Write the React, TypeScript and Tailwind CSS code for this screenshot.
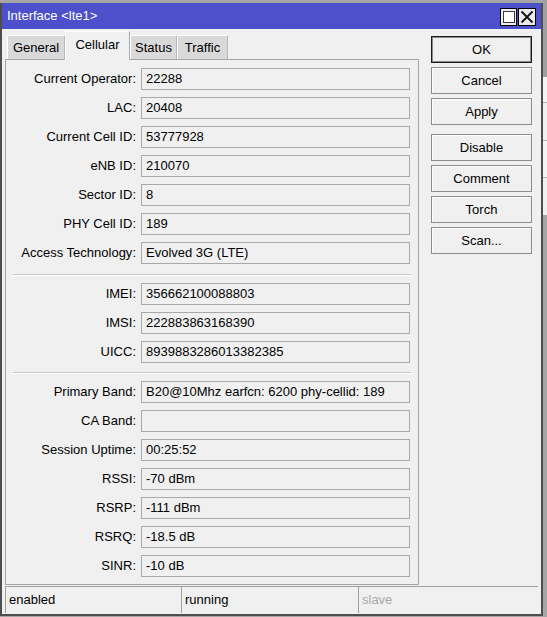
import React from 'react';

type Row = [string, string];

const cellInfo: Row[] = [
  ['Current Operator', '22288'],
  ['LAC', '20408'],
  ['Current Cell ID', '53777928'],
  ['eNB ID', '210070'],
  ['Sector ID', '8'],
  ['PHY Cell ID', '189'],
  ['Access Technology', 'Evolved 3G (LTE)'],
];

const simInfo: Row[] = [
  ['IMEI', '356662100088803'],
  ['IMSI', '222883863168390'],
  ['UICC', '8939883286013382385'],
];

const signalInfo: Row[] = [
  ['Primary Band', 'B20@10Mhz earfcn: 6200 phy-cellid: 189'],
  ['CA Band', ''],
  ['Session Uptime', '00:25:52'],
  ['RSSI', '-70 dBm'],
  ['RSRP', '-111 dBm'],
  ['RSRQ', '-18.5 dB'],
  ['SINR', '-10 dB'],
];

const tabs = [
  { name: 'General', w: 'w-[58px]' },
  { name: 'Cellular', w: 'w-[65px]' },
  { name: 'Status', w: 'w-[47px]' },
  { name: 'Traffic', w: 'w-[51px]' },
];

const Field = ({ label, value }: { label: string; value: string }) => (
  <div className="flex h-[22px] items-center">
    <span className="w-[135px] shrink-0 pr-[5px] text-right">{label}:</span>
    <div className="flex h-[22px] w-[269px] items-center border border-[#a9a9a9] pl-[4px] whitespace-nowrap">
      {value}
    </div>
  </div>
);

const Separator = ({ top }: { top: string }) => (
  <div className={`mx-[7px] ${top} h-[2px] border-t border-b border-t-[#c6c6c6] border-b-white`} />
);

const Button = ({ label, primary, extra }: { label: string; primary?: boolean; extra?: string }) => (
  <button
    type="button"
    className={`h-[27px] w-[101px] bg-[#f0f0f0] text-[13px] text-black ${
      primary
        ? 'border border-[#1c1c1c] shadow-[inset_0_0_0_1px_#8a8a8a]'
        : 'border border-[#8c8c8c] shadow-[inset_1px_1px_0_#ffffff]'
    } ${extra ?? ''}`}
  >
    {label}
  </button>
);

export default function App() {
  return (
    <div className="flex h-[617px] w-[547px] overflow-hidden bg-[#a6a6a6] font-['Liberation_Sans',Arial,sans-serif] text-[13px] text-black">
      <div className="mt-[3px] flex h-[613px] w-[543px] shrink-0 flex-col border-x-2 border-b-2 border-[#4e4e4e] bg-[#f0f0f0]">
        {/* title bar */}
        <div className="flex h-[26px] shrink-0 items-center bg-[#4c50cb] pl-[5px] pr-[5px]">
          <span className="text-white">Interface &lt;lte1&gt;</span>
          <div className="ml-auto flex gap-[1px] pt-[1px]">
            <div className="flex h-[18px] w-[17px] items-center justify-center border border-black bg-[#ececec]">
              <div className="h-[12px] w-[12px] border border-[#3a3a3a] bg-white" />
            </div>
            <div className="flex h-[18px] w-[18px] items-center justify-center border border-black bg-[#ececec]">
              <svg width="14" height="14" viewBox="0 0 14 14">
                <path d="M1.5 1.5 L12.5 12.5 M12.5 1.5 L1.5 12.5" stroke="#111" strokeWidth="1.8" />
              </svg>
            </div>
          </div>
        </div>

        <div className="flex">
          {/* tabs + cellular panel */}
          <div className="ml-[3px] pt-[2px]">
            <div className="ml-[2px] flex h-[28px] items-end">
              {tabs.map((t) =>
                t.name === 'Cellular' ? (
                  <div
                    key={t.name}
                    className={`relative z-10 -mb-px flex h-[29px] ${t.w} items-center justify-center border-t border-l border-r border-t-white border-l-white border-r-[#a9a9a9] bg-[#f0f0f0] pb-[3px]`}
                  >
                    {t.name}
                  </div>
                ) : (
                  <div
                    key={t.name}
                    className={`flex h-[24px] ${t.w} items-center justify-center border-t border-l border-r border-t-white border-l-white border-r-[#b9b9b9] bg-[#d9d9d9]`}
                  >
                    {t.name}
                  </div>
                )
              )}
            </div>
            <div className="flex h-[526px] w-[414px] flex-col gap-[7px] border border-[#a5a5a5] pt-[8px]">
              {cellInfo.map(([l, v]) => (
                <Field key={l} label={l} value={v} />
              ))}
              <Separator top="mt-[3px]" />
              {simInfo.map(([l, v]) => (
                <Field key={l} label={l} value={v} />
              ))}
              <Separator top="mt-[2px]" />
              {signalInfo.map(([l, v]) => (
                <Field key={l} label={l} value={v} />
              ))}
            </div>
          </div>

          {/* dialog buttons */}
          <div className="ml-[12px] flex flex-col gap-[4px] pt-[7px]">
            <Button label="OK" primary />
            <Button label="Cancel" />
            <Button label="Apply" />
            <Button label="Disable" extra="mt-[5px]" />
            <Button label="Comment" />
            <Button label="Torch" />
            <Button label="Scan..." />
          </div>
        </div>

        {/* status bar */}
        <div className="ml-[3px] mr-[3px] mt-px flex h-[27px]">
          <div className="flex w-[176px] items-center border-t border-l border-[#a0a0a0] pl-[3px]">enabled</div>
          <div className="flex w-[177px] items-center border-t border-l border-[#a0a0a0] pl-[3px]">running</div>
          <div className="flex flex-1 items-center border-t border-l border-[#a0a0a0] pl-[3px] text-[#a8a8a8]">
            slave
          </div>
        </div>
      </div>

      {/* strip of the window behind */}
      <div className="flex w-[4px] flex-col">
        <div className="h-[77px] bg-[#a0a0a0]" />
        <div className="h-[25px] bg-[#f4f4f4]" />
        <div className="h-[38px] border-t border-[#b4b4b4] bg-[#f0f0f0]" />
        <div className="h-[37px] border-t border-[#b4b4b4] bg-[#f4f4f4]" />
        <div className="h-[38px] border-t border-[#b4b4b4] bg-[#f0f0f0]" />
        <div className="flex-1 bg-[#a6a6a6]" />
      </div>
    </div>
  );
}
